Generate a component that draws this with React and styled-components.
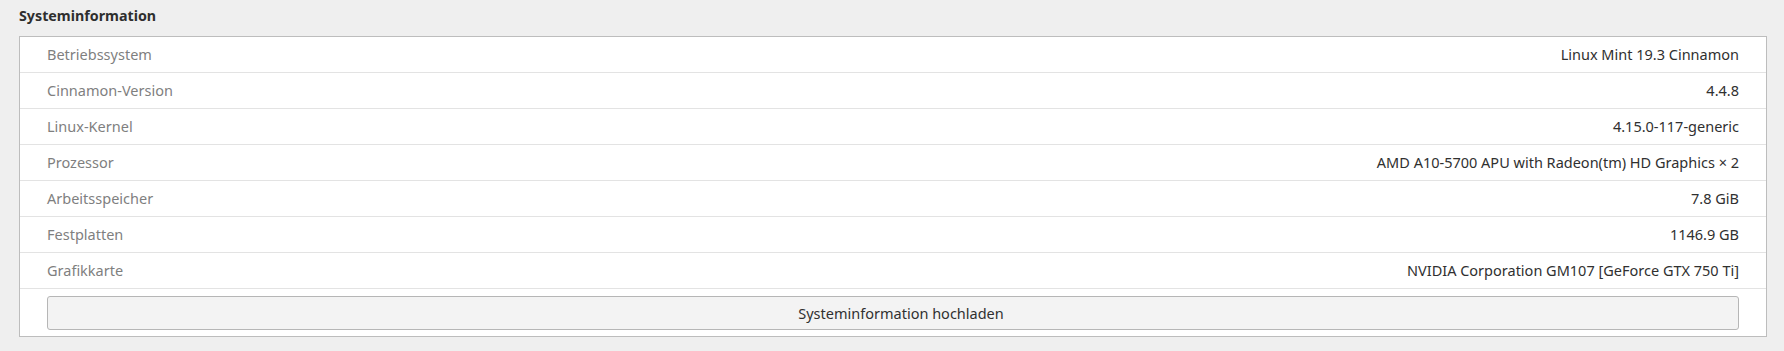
import React from "react";
import styled, { createGlobalStyle } from "styled-components";

const Global = createGlobalStyle`
  html, body { margin: 0; padding: 0; background: #efefef; }
  body { font-family: "Noto Sans", "DejaVu Sans", sans-serif; font-size: 14.5px; color: #303030; }
`;

const Page = styled.div`
  padding: 6px 17px 14px 19px;
  width: 1784px;
  box-sizing: border-box;
`;

const Title = styled.h2`
  margin: 0 0 10px 0;
  font-size: 14.25px;
  line-height: 20px;
  font-weight: 700;
  color: #2e2e2e;
`;

const Panel = styled.div`
  background: #ffffff;
  border: 1px solid #bdbdbd;
  display: flex;
  flex-direction: column;
`;

const Row = styled.div`
  display: flex;
  justify-content: space-between;
  align-items: center;
  height: 35px;
  padding: 0 27px;
  border-bottom: 1px solid #e3e3e3;
  line-height: 35px;
`;

const Label = styled.span`
  color: #7f7f7f;
`;

const Value = styled.span`
  color: #303030;
`;

const ButtonArea = styled.div`
  padding: 7px 27px 6px 27px;
  display: flex;
`;

const Button = styled.button`
  flex: 1;
  height: 34px;
  padding: 0 0 0 16px;
  background: #f3f3f3;
  border: 1px solid #b6b6b6;
  border-radius: 3px;
  font-family: inherit;
  font-size: 14.5px;
  color: #303030;
  cursor: pointer;
`;

const rows = [
  ["Betriebssystem", "Linux Mint 19.3 Cinnamon"],
  ["Cinnamon-Version", "4.4.8"],
  ["Linux-Kernel", "4.15.0-117-generic"],
  ["Prozessor", "AMD A10-5700 APU with Radeon(tm) HD Graphics × 2"],
  ["Arbeitsspeicher", "7.8 GiB"],
  ["Festplatten", "1146.9 GB"],
  ["Grafikkarte", "NVIDIA Corporation GM107 [GeForce GTX 750 Ti]"],
];

export default function App() {
  return (
    <>
      <Global />
      <Page>
        <Title>Systeminformation</Title>
        <Panel>
          {rows.map(([k, v]) => (
            <Row key={k}>
              <Label>{k}</Label>
              <Value>{v}</Value>
            </Row>
          ))}
          <ButtonArea>
            <Button>Systeminformation hochladen</Button>
          </ButtonArea>
        </Panel>
      </Page>
    </>
  );
}
